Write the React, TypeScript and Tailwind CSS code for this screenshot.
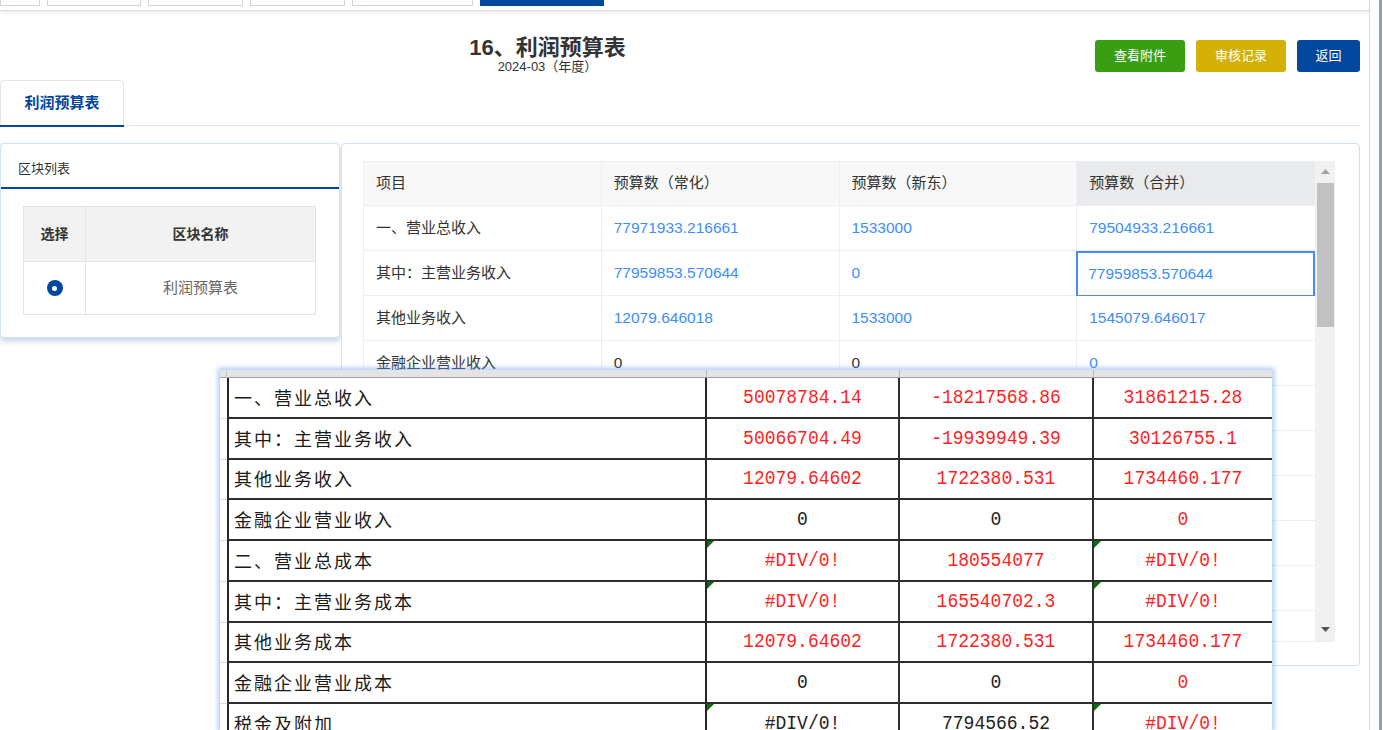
import React from "react";

const ui = { fontFamily: '"Liberation Sans", "Noto Sans CJK SC", sans-serif' };
const cjk = { fontFamily: '"Noto Sans CJK SC", sans-serif' };
const mono = { fontFamily: '"Liberation Mono", "Noto Sans CJK SC", monospace' };

const topTabs = [40, 94, 95, 95, 121];

// rows below the 4th sit under the pasted sheet, so they carry no text
const mainRows = [
  { name: "一、营业总收入", a: "77971933.216661", b: "1533000", c: "79504933.216661" },
  { name: "其中：主营业务收入", a: "77959853.570644", b: "0", c: "77959853.570644", sel: true },
  { name: "其他业务收入", a: "12079.646018", b: "1533000", c: "1545079.646017" },
  { name: "金融企业营业收入", a: "0", b: "0", c: "0", plain: true },
  { name: "r5", a: "", b: "", c: "" },
  { name: "r6", a: "", b: "", c: "" },
  { name: "r7", a: "", b: "", c: "" },
  { name: "r8", a: "", b: "", c: "" },
  { name: "r9", a: "", b: "", c: "" },
  { name: "r10", a: "", b: "", c: "" },
];

type Cell = { v: string; red: boolean; tri?: boolean };
const sheetRows: { name: string; cells: Cell[] }[] = [
  { name: "一、营业总收入", cells: [{ v: "50078784.14", red: true }, { v: "-18217568.86", red: true }, { v: "31861215.28", red: true }] },
  { name: "其中：主营业务收入", cells: [{ v: "50066704.49", red: true }, { v: "-19939949.39", red: true }, { v: "30126755.1", red: true }] },
  { name: "其他业务收入", cells: [{ v: "12079.64602", red: true }, { v: "1722380.531", red: true }, { v: "1734460.177", red: true }] },
  { name: "金融企业营业收入", cells: [{ v: "0", red: false }, { v: "0", red: false }, { v: "0", red: true }] },
  { name: "二、营业总成本", cells: [{ v: "#DIV/0!", red: true, tri: true }, { v: "180554077", red: true }, { v: "#DIV/0!", red: true, tri: true }] },
  { name: "其中：主营业务成本", cells: [{ v: "#DIV/0!", red: true, tri: true }, { v: "165540702.3", red: true }, { v: "#DIV/0!", red: true, tri: true }] },
  { name: "其他业务成本", cells: [{ v: "12079.64602", red: true }, { v: "1722380.531", red: true }, { v: "1734460.177", red: true }] },
  { name: "金融企业营业成本", cells: [{ v: "0", red: false }, { v: "0", red: false }, { v: "0", red: true }] },
  { name: "税金及附加", cells: [{ v: "#DIV/0!", red: false, tri: true }, { v: "7794566.52", red: false }, { v: "#DIV/0!", red: true, tri: true }] },
];

function Tri() {
  return (
    <svg className="absolute left-0 top-0" width="7" height="7" viewBox="0 0 7 7">
      <path d="M0 0H7L0 7Z" fill="#0b6e0b" />
    </svg>
  );
}

function SheetOverlay() {
  const widths = ["w-[193px]", "w-[194px]", "flex-1"];
  return (
    <div className="absolute left-[220px] top-[370px] w-[1052px] h-[360px] bg-white overflow-hidden shadow-[0_0_5px_2px_rgba(110,165,255,0.6)]">
      <div className="flex h-[8px] bg-[#e4e4e4] border-b border-[#a0a0a0]">
        <div className="w-[7px] border-r border-[#c8c8c8]" />
        <div className="w-[480px] border-r border-[#b8b8b8]" />
        <div className="w-[193px] border-r border-[#b8b8b8]" />
        <div className="w-[194px] border-r border-[#b8b8b8]" />
        <div className="flex-1" />
      </div>
      {sheetRows.map((r) => (
        <div key={r.name} className="flex h-[40.75px]">
          <div className="w-[7px] border-b border-[#dcdcdc]" />
          <div className="flex flex-1 border-b-2 border-[#2e2e2e]">
            <div
              className="w-[480px] border-l-2 border-r-2 border-[#262626] pl-[5px] flex items-center text-[18px] tracking-[2px] text-[#1a1a1a]"
              style={cjk}
            >
              {r.name}
            </div>
            {r.cells.map((c, i) => (
              <div
                key={i}
                className={`relative ${widths[i]} ${i < 2 ? "border-r-2 border-[#303030]" : ""} flex items-center justify-center text-[18px] ${c.red ? "text-[#ff1f1f]" : "text-[#222]"}`}
                style={mono}
              >
                {c.tri && <Tri />}
                <span className="inline-block scale-y-[1.15]">{c.v}</span>
              </div>
            ))}
          </div>
        </div>
      ))}
    </div>
  );
}

export default function App() {
  return (
    <div className="relative w-[1383px] h-[730px] overflow-hidden bg-white flex text-[#333]" style={ui}>
      <div className="w-[1370px] border-r border-[#d9dde3]">
        {/* top tab strip */}
        <div className="h-[11px] border-b border-[#d7dbe1] shadow-[0_2px_4px_rgba(0,0,0,0.08)] flex gap-[7px] items-start">
          {topTabs.map((w, i) => (
            <div key={i} className="h-[6px] border border-t-0 border-[#cfd5dd] bg-white" style={{ width: w }} />
          ))}
          <div className="w-[124px] h-[6px] bg-[#00479d]" />
        </div>

        <div className="w-[1360px]">
          {/* header */}
          <div className="flex items-start h-[69px] pt-[25px]">
            <div className="flex-1 flex flex-col items-center">
              <div className="text-[22px] leading-[24px] font-bold text-[#333]">16、利润预算表</div>
              <div className="text-[13px] leading-[16px] mt-[-1px] text-[#333]">2024-03（年度）</div>
            </div>
            <div className="flex gap-[11px] mt-[4px] text-white text-[13px]">
              <button className="w-[90px] h-[32px] rounded-[3px] bg-[#3a9e13]">查看附件</button>
              <button className="w-[90px] h-[32px] rounded-[3px] bg-[#d4b106]">审核记录</button>
              <button className="w-[63px] h-[32px] rounded-[3px] bg-[#00479d]">返回</button>
            </div>
          </div>

          {/* tabs */}
          <div className="h-[46px] border-b border-[#e2e4e8] flex">
            <div className="w-[124px] h-[46px] border border-b-0 border-[#e2e6ec] rounded-t-[4px] flex items-center justify-center text-[15px] font-bold text-[#00479d] relative">
              利润预算表
              <div className="absolute left-[-1px] right-[-1px] bottom-[-1px] h-[2px] bg-[#00479d]" />
            </div>
          </div>

          {/* panels */}
          <div className="flex items-start gap-px mt-[17px]">
            <div className="w-[340px] h-[195px] bg-white border border-[#d3e2f4] rounded-[4px] shadow-[0_3px_6px_rgba(60,100,170,0.3)]">
              <div className="h-[45px] border-b-2 border-[#00479d] flex items-center pt-[6px] pl-[17px] text-[13px] text-[#333]">区块列表</div>
              <div className="ml-[22px] mt-[17px] w-[293px] border border-[#dfe5ec]">
                <div className="flex h-[54px] bg-[#f2f2f2] text-[14px] font-bold text-[#333]">
                  <div className="w-[62px] border-r border-[#dfe5ec] flex items-center justify-center">选择</div>
                  <div className="flex-1 flex items-center justify-center">区块名称</div>
                </div>
                <div className="flex h-[53px] border-t border-[#dfe5ec]">
                  <div className="w-[62px] border-r border-[#dfe5ec] flex items-center justify-center">
                    <div className="w-[16px] h-[16px] rounded-full bg-[#00479d] flex items-center justify-center">
                      <div className="w-[5px] h-[5px] rounded-full bg-white" />
                    </div>
                  </div>
                  <div className="flex-1 flex items-center justify-center text-[15px] text-[#666]">利润预算表</div>
                </div>
              </div>
            </div>

            <div className="w-[1019px] h-[523px] border border-[#cfe0f3] rounded-[4px] bg-white pl-[21px] pt-[17px]">
              <div className="flex h-[481px] w-[972px] overflow-hidden border-b border-[#ebeef5]">
                <div className="w-[952px] border-l border-t border-[#ebeef5]">
                  <div className="grid grid-cols-4 h-[44px] text-[15px] text-[#333]">
                    <div className="bg-[#f8f8f8] border-r border-b border-[#ebeef5] flex items-center pl-[12px]">项目</div>
                    <div className="bg-[#f8f8f8] border-r border-b border-[#ebeef5] flex items-center pl-[12px]">预算数（常化）</div>
                    <div className="bg-[#f8f8f8] border-r border-b border-[#ebeef5] flex items-center pl-[12px]">预算数（新东）</div>
                    <div className="bg-[#e9eaeb] border-b border-[#ebeef5] flex items-center pl-[12px]">预算数（合并）</div>
                  </div>
                  {mainRows.map((r) => (
                    <div key={r.name} className="grid grid-cols-4 h-[45px] text-[15.5px]">
                      <div className="border-r border-b border-[#ebeef5] flex items-center pl-[12px] text-[#333] text-[15px]">
                        {r.name.startsWith("r") && r.name.length < 4 ? "" : r.name}
                      </div>
                      <div className={`border-r border-b border-[#ebeef5] flex items-center pl-[12px] ${r.plain ? "text-[#333]" : "text-[#3d8ef8]"}`}>{r.a}</div>
                      <div className={`border-r border-b border-[#ebeef5] flex items-center pl-[12px] ${r.plain ? "text-[#333]" : "text-[#3d8ef8]"}`}>{r.b}</div>
                      <div
                        className={`border-b flex items-center text-[#3d8ef8] ${r.sel ? "border-2 border-[#4a8af4] pl-[10px] ml-[-1px]" : "border-[#ebeef5] pl-[12px]"}`}
                      >
                        {r.c}
                      </div>
                    </div>
                  ))}
                </div>
                <div className="w-[20px] bg-[#f1f1f1] flex flex-col items-center">
                  <svg className="mt-[8px]" width="9" height="5" viewBox="0 0 9 5">
                    <path d="M0 5L4.5 0L9 5Z" fill="#a3a3a3" />
                  </svg>
                  <div className="mt-[9px] w-[17px] h-[144px] bg-[#c1c1c1]" />
                  <div className="flex-1" />
                  <svg className="mb-[9px]" width="9" height="5" viewBox="0 0 9 5">
                    <path d="M0 0L9 0L4.5 5Z" fill="#555" />
                  </svg>
                </div>
              </div>
            </div>
          </div>
        </div>
      </div>
      <div className="w-[9px]" />
      <div className="w-[3px] bg-[#8da0b4]" />

      <SheetOverlay />
    </div>
  );
}
